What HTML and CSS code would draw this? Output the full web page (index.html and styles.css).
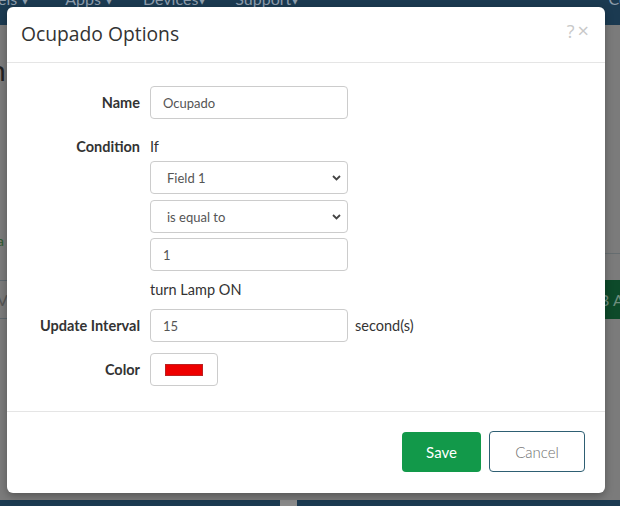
FILE: index.html
```html
<!DOCTYPE html>
<html>
<head>
<meta charset="utf-8">
<link rel="stylesheet" href="styles.css">
</head>
<body>
<div class="page">
  <nav class="nav">
    <span class="nav-item n1">els ▾</span>
    <span class="nav-item n2">Apps ▾</span>
    <span class="nav-item n3">Devices▾</span>
    <span class="nav-item n4">Support▾</span>
    <span class="nav-item n5">Co</span>
  </nav>
  <div class="content">
    <div class="frag-n">n</div>
    <div class="frag-a">a</div>
    <div class="frag-line"></div>
    <div class="tabrow">
      <span class="tab-v">V</span>
      <span class="tab-btn">B A</span>
    </div>
  </div>
  <div class="bottom">
    <div class="bottom-a"></div>
    <div class="bottom-gap"></div>
    <div class="bottom-b"></div>
  </div>
</div>

<div class="modal">
  <div class="modal-header">
    <h4 class="modal-title">Ocupado Options</h4>
    <div class="header-icons"><span class="help">?</span><span class="close">×</span></div>
  </div>
  <div class="modal-body">
    <div class="row row-name">
      <label class="lbl">Name</label>
      <div class="ctrl">
        <div class="input">Ocupado</div>
      </div>
    </div>
    <div class="row row-cond">
      <label class="lbl lbl-text">Condition</label>
      <div class="ctrl col">
        <div class="plain">If</div>
        <div class="select s1"><span>Field 1</span>
          <svg class="chev" width="9" height="6" viewBox="0 0 9 6"><path d="M1 1 L4.5 4.5 L8 1" fill="none" stroke="#444" stroke-width="1.8"/></svg>
        </div>
        <div class="select s2"><span>is equal to</span>
          <svg class="chev" width="9" height="6" viewBox="0 0 9 6"><path d="M1 1 L4.5 4.5 L8 1" fill="none" stroke="#444" stroke-width="1.8"/></svg>
        </div>
        <div class="input i3">1</div>
        <div class="plain turn">turn Lamp ON</div>
      </div>
    </div>
    <div class="row row-int">
      <label class="lbl">Update Interval</label>
      <div class="ctrl">
        <div class="input">15</div>
        <span class="unit">second(s)</span>
      </div>
    </div>
    <div class="row row-color">
      <label class="lbl">Color</label>
      <div class="ctrl">
        <div class="colorbox"><div class="swatch"></div></div>
      </div>
    </div>
  </div>
  <div class="modal-footer">
    <button class="btn btn-save">Save</button>
    <button class="btn btn-cancel">Cancel</button>
  </div>
</div>
</body>
</html>
```
FILE: styles.css
```css
* { box-sizing: border-box; }
html, body { margin: 0; padding: 0; }
body {
  width: 620px;
  height: 506px;
  overflow: hidden;
  font-family: Lato, "Liberation Sans", sans-serif;
  color: #333;
  position: relative;
}
.page {
  width: 620px;
  height: 506px;
  background: #7b7b7b;
  display: flex;
  flex-direction: column;
}
.nav {
  height: 25px;
  background: #1b3a51;
  display: flex;
  align-items: flex-start;
  overflow: hidden;
  flex: none;
}
.nav-item {
  color: #8d9cab;
  font-size: 16px;
  line-height: 18px;
  margin-top: -10px;
  white-space: nowrap;
}
.n1 { margin-left: -2px; }
.n2 { margin-left: 36px; }
.n3 { margin-left: 30px; }
.n4 { margin-left: 29px; }
.n5 { margin-left: auto; margin-right: -8px; }
.content {
  flex: 1;
  position: relative;
  display: flex;
  flex-direction: column;
}
.frag-n {
  font-size: 28px;
  color: #222;
  margin-top: 30px;
  margin-left: -10px;
  line-height: 30px;
}
.frag-a {
  color: #2f5a2f;
  font-size: 14px;
  line-height: 16px;
  margin-top: 148px;
  margin-left: -3px;
}
.frag-line {
  margin-top: 4px;
  height: 1px;
  margin-left: 590px;
  background: #666d70;
}
.tabrow {
  margin-top: 26px;
  height: 39px;
  border-top: 1px solid #5d676d;
  border-bottom: 1px solid #5d676d;
  display: flex;
  align-items: center;
  justify-content: space-between;
}
.tab-v {
  color: #555;
  font-size: 16px;
  margin-left: -3px;
}
.tab-btn {
  align-self: stretch;
  background: #0d4a2a;
  color: #6d8d7d;
  font-size: 16px;
  width: 24px;
  display: flex;
  align-items: center;
  padding-left: 3px;
  white-space: nowrap;
  overflow: hidden;
  margin-top: -1px;
  margin-bottom: -1px;
}
.bottom {
  height: 6px;
  display: flex;
  flex: none;
}
.bottom-a { width: 280px; background: #1b3a51; }
.bottom-gap { width: 17px; background: #8a8a8a; }
.bottom-b { flex: 1; background: #1b3a51; }

/* modal */
.modal {
  position: absolute;
  left: 7px;
  top: 7px;
  width: 598px;
  height: 486px;
  background: #fff;
  border-radius: 6px;
  box-shadow: 0 3px 9px rgba(0,0,0,0.3);
  display: flex;
  flex-direction: column;
}
.modal-header {
  height: 56px;
  border-bottom: 1px solid #e5e5e5;
  display: flex;
  align-items: center;
  justify-content: space-between;
  padding: 0 16px 0 14px;
  flex: none;
}
.modal-title {
  margin: 0;
  font-family: "Open Sans", "Liberation Sans", sans-serif;
  font-weight: 400;
  font-size: 19.3px;
  color: #333;
  margin-top: -2px;
}
.header-icons {
  display: flex;
  align-items: center;
  gap: 3px;
  color: #c8c8c8;
  margin-top: -8px;
}
.help { font-size: 18px; font-family: "Open Sans", sans-serif; }
.close { font-size: 20px; font-family: "Open Sans", sans-serif; }

.modal-body {
  padding: 23px 0 25px 0;
  flex: none;
  display: flex;
  flex-direction: column;
}
.row {
  display: grid;
  grid-template-columns: 133px auto;
  column-gap: 10px;
  align-items: center;
}
.row-cond { margin-top: 18px; align-items: start; }
.row-int { margin-top: 9px; }
.row-color { margin-top: 11px; }
.lbl {
  text-align: right;
  font-weight: 700;
  font-size: 14.5px;
  color: #333;
}
.lbl-text { line-height: 20px; }
.ctrl {
  display: flex;
  align-items: center;
}
.ctrl.col {
  flex-direction: column;
  align-items: flex-start;
}
.plain {
  font-size: 14.5px;
  line-height: 20px;
  color: #333;
}
.input, .select {
  width: 198px;
  height: 33px;
  border: 1px solid #ccc;
  border-radius: 4px;
  background: #fff;
  font-size: 13px;
  color: #555;
  display: flex;
  align-items: center;
  padding-left: 12px;
}
.select {
  padding-left: 16px;
  padding-right: 6px;
  justify-content: space-between;
  height: 33px;
}
.chev { display: block; margin-top: 1px; }
.s1 { margin-top: 4px; }
.s2 { margin-top: 6px; }
.i3 { margin-top: 5px; }
.turn { margin-top: 9px; }
.unit {
  margin-left: 7px;
  font-size: 14.5px;
  color: #333;
}
.colorbox {
  width: 68px;
  height: 33px;
  border: 1px solid #ccc;
  border-radius: 4px;
  display: flex;
  align-items: center;
  justify-content: center;
}
.swatch {
  width: 38px;
  height: 12px;
  background: #ee0000;
  border: 1px solid #b22;
}
.modal-footer {
  border-top: 1px solid #e5e5e5;
  flex: 1;
  display: flex;
  justify-content: flex-end;
  align-items: flex-start;
  padding: 19px 20px 0 0;
  gap: 8px;
}
.btn {
  font-family: Lato, "Liberation Sans", sans-serif;
  font-size: 15px;
  border-radius: 4px;
  cursor: pointer;
}
.btn-save {
  width: 79px;
  height: 40px;
  margin-top: 1px;
  background: #12994a;
  color: #fff;
  border: none;
}
.btn-cancel {
  width: 96px;
  height: 41px;
  background: #fff;
  color: #6f6f6f;
  font-weight: 300;
  border: 1px solid #2e5f73;
}
```
